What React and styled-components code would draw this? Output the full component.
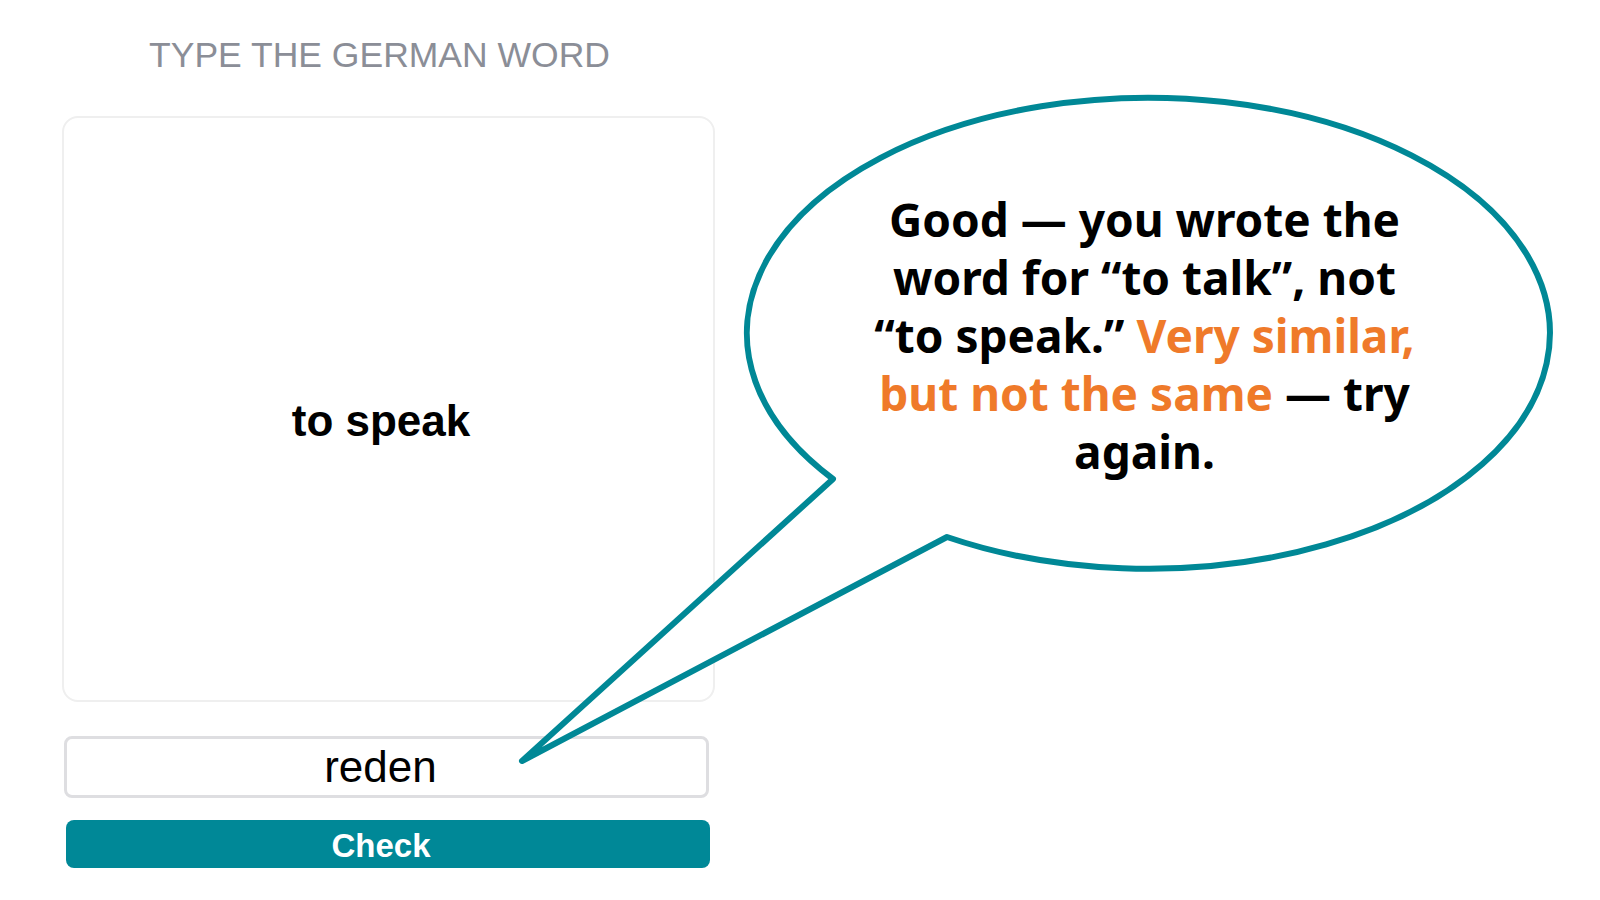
import React from 'react'
import styled, { createGlobalStyle } from 'styled-components'

const GlobalStyle = createGlobalStyle`
  html, body {
    margin: 0;
    padding: 0;
    background: #fff;
  }
  body {
    font-family: "Liberation Sans", Arial, sans-serif;
  }
`;

const Page = styled.div`
  position: relative;
  width: 1600px;
  height: 900px;
  overflow: hidden;
  background: #fff;
`;

const Column = styled.div`
  display: flex;
  flex-direction: column;
  align-items: flex-start;
  width: 653px;
  margin-left: 62px;
  padding-top: 35px;
`;

const Title = styled.div`
  width: 100%;
  box-sizing: border-box;
  padding-right: 18px;
  text-align: center;
  font-size: 35.5px;
  line-height: 40px;
  color: #8b8e97;
`;

const Card = styled.div`
  box-sizing: border-box;
  width: 653px;
  height: 586px;
  margin-top: 41px;
  padding: 24px 15px 0 0;
  border: 2px solid #efefef;
  border-radius: 16px;
  display: flex;
  align-items: center;
  justify-content: center;
`;

const Prompt = styled.div`
  font-weight: 700;
  font-size: 44px;
  color: #000;
`;

const Answer = styled.div`
  box-sizing: border-box;
  width: 645px;
  height: 62px;
  margin: 34px 0 0 2px;
  padding-right: 12px;
  border: 3px solid #dedee1;
  border-radius: 8px;
  display: flex;
  align-items: center;
  justify-content: center;
  font-size: 44px;
  color: #000;
`;

const CheckButton = styled.button`
  box-sizing: border-box;
  width: 644px;
  height: 48px;
  margin: 22px 0 0 4px;
  padding: 4px 14px 0 0;
  border: none;
  border-radius: 8px;
  background: #008897;
  color: #fff;
  font-family: "Liberation Sans", Arial, sans-serif;
  font-weight: 700;
  font-size: 33px;
  cursor: pointer;
`;

const Callout = styled.div`
  position: absolute;
  left: 0;
  top: 0;
  width: 1600px;
  height: 900px;
  pointer-events: none;
`;

const BubbleShape = styled.svg`
  position: absolute;
  left: 0;
  top: 0;
`;

const BubbleText = styled.div`
  position: absolute;
  left: 743px;
  top: 97px;
  width: 803px;
  height: 471px;
  box-sizing: border-box;
  padding-top: 5px;
  display: flex;
  align-items: center;
  justify-content: center;
  text-align: center;
  white-space: nowrap;
  font-family: "Noto Sans", Lato, sans-serif;
  font-weight: 700;
  font-size: 46px;
  line-height: 58px;
  color: #000;
`;

const Hint = styled.span`
  color: #ef7a2a;
`;

export default function App() {
  return (
    <Page>
      <GlobalStyle />
      <Column>
        <Title>TYPE THE GERMAN WORD</Title>
        <Card>
          <Prompt>to speak</Prompt>
        </Card>
        <Answer>reden</Answer>
        <CheckButton>Check</CheckButton>
      </Column>
      <Callout>
        <BubbleShape width="1600" height="900" viewBox="0 0 1600 900">
          <path
            d="M 947 537 A 401.5 235.5 0 1 0 833 479 L 522 761 Z"
            fill="#fff"
            stroke="#008896"
            strokeWidth="6"
            strokeLinejoin="round"
          />
        </BubbleShape>
        <BubbleText>
          <div>
            Good — you wrote the<br />
            word for “to talk”, not<br />
            “to speak.” <Hint>Very similar,</Hint><br />
            <Hint>but not the same</Hint> — try<br />
            again.
          </div>
        </BubbleText>
      </Callout>
    </Page>
  )
}
